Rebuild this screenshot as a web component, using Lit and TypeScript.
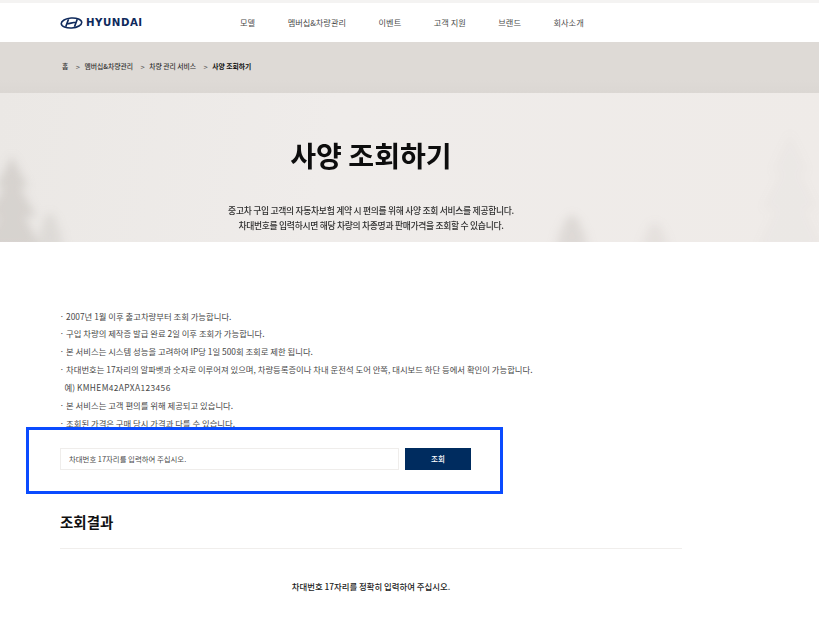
import { LitElement, html, css, svg } from "lit";
import { customElement } from "lit/decorators.js";

const NAV = ["모델", "멤버십&차량관리", "이벤트", "고객 지원", "브랜드", "회사소개"];
const NOTES = [
  "2007년 1월 이후 출고차량부터 조회 가능합니다.",
  "구입 차량의 제작증 발급 완료 2일 이후 조회가 가능합니다.",
  "본 서비스는 시스템 성능을 고려하여 IP당 1일 500회 조회로 제한 됩니다.",
  "차대번호는 17자리의 알파벳과 숫자로 이루어져 있으며, 차량등록증이나 차내 운전석 도어 안쪽, 대시보드 하단 등에서 확인이 가능합니다.",
];

const tree = (x: number, base: number, w: number, h: number, o: number) => svg`
  <path fill="#b5b0aa" opacity=${o} d="M${x} ${base - h} L${x + w * 0.28} ${base - h * 0.66} L${x + w * 0.14} ${base - h * 0.66}
  L${x + w * 0.42} ${base - h * 0.34} L${x + w * 0.22} ${base - h * 0.34} L${x + w * 0.5} ${base} L${x - w * 0.5} ${base}
  L${x - w * 0.22} ${base - h * 0.34} L${x - w * 0.42} ${base - h * 0.34} L${x - w * 0.14} ${base - h * 0.66} L${x - w * 0.28} ${base - h * 0.66} Z"/>`;

@customElement("app-root")
export class AppRoot extends LitElement {
  static styles = css`
    :host {
      display: block;
      position: relative;
      width: 819px;
      height: 628px;
      overflow: hidden;
      background: #fff;
      font-family: "Noto Sans CJK KR", "Noto Sans", sans-serif;
      color: #444;
    }
    .strip { height: 3px; background: #f4f3f2; }
    .header { height: 39px; display: flex; align-items: center; background: #fff; padding-left: 60px; }
    .logo { display: flex; align-items: center; gap: 3px; width: 180px; color: #0f2a5c; }
    .logo-text {
      font-family: "DejaVu Sans", sans-serif;
      font-weight: 700;
      font-size: 11px;
      letter-spacing: 0.55px;
      line-height: 12px;
      transform: scaleX(0.93);
      transform-origin: left center;
    }
    .nav { display: flex; gap: 32.6px; margin-top: -1px; }
    .nav a {
      font-size: 8.2px;
      line-height: 13px;
      color: #4a4a4a;
      white-space: nowrap;
    }
    .crumbs {
      height: 51px;
      box-sizing: border-box;
      background: linear-gradient(180deg, #dedad6 0%, #dedad6 75%, #dbd7d3 100%);
      padding: 0 0 3px 62px;
      display: flex;
      align-items: center;
      font-size: 6.8px;
      font-weight: 500;
      color: #333;
      white-space: nowrap;
    }
    .crumbs .sep { color: #555; margin: 0 4.5px 0 7.5px; font-size: 7.5px; font-weight: 400; }
    .crumbs .here { color: #111; font-weight: 700; }
    .hero {
      position: relative;
      height: 149px;
      background: linear-gradient(100deg, #ebe8e5 0%, #efecea 40%, #efebe8 100%);
      overflow: hidden;
    }
    .hero svg { position: absolute; left: 0; top: 0; }
    .hero-inner { position: relative; width: 622px; margin-left: 60px; text-align: center; }
    .hero h1 {
      margin: 0;
      padding-top: 42px;
      font-size: 28.1px;
      line-height: 40px;
      font-weight: 700;
      color: #0d0d0d;
    }
    .hero p {
      margin: 28px 0 0;
      font-size: 8.8px;
      letter-spacing: -0.3px;
      line-height: 15px;
      font-weight: 500;
      color: #2f2f2f;
    }
    .notes {
      list-style: none;
      margin: 0;
      padding: 65.5px 0 0 59.5px;
      font-size: 8.35px;
      line-height: 17.85px;
      color: #474747;
    }
    .notes li { white-space: nowrap; }
    .notes li::before { content: "· "; }
    .notes .ex { padding-left: 5px; }
    .notes .ex::before { content: ""; }
    .vin { letter-spacing: 0.4px; }
    .search { display: flex; gap: 6px; margin: 15.5px 0 0 60px; }
    .field {
      width: 339px;
      height: 22px;
      box-sizing: border-box;
      border: 1px solid #efedeb;
      padding-left: 8px;
      font-size: 7.4px;
      line-height: 20px;
      color: #4a4a4a;
    }
    .btn {
      width: 66px;
      height: 22px;
      background: #002c5f;
      color: #fff;
      font-size: 7.5px;
      font-weight: 500;
      line-height: 22px;
      text-align: center;
    }
    .result { margin: 40px 0 0 60px; width: 622px; }
    .result h2 {
      margin: 0;
      font-size: 14.5px;
      line-height: 24px;
      font-weight: 700;
      color: #111;
      padding-bottom: 14px;
      border-bottom: 1.5px solid #f0eeec;
    }
    .result p {
      margin: 30px 0 0;
      text-align: center;
      font-size: 8.4px;
      line-height: 14px;
      font-weight: 500;
      color: #222;
    }
    .highlight {
      position: absolute;
      left: 26px;
      top: 427px;
      width: 477px;
      height: 67px;
      box-sizing: border-box;
      border: 3px solid #0a4bff;
      pointer-events: none;
    }
  `;

  render() {
    return html`
      <div class="strip"></div>
      <div class="header">
        <div class="logo">
          <svg width="23" height="12" viewBox="0 0 46 24" fill="none">
            <ellipse cx="23" cy="12" rx="20.5" ry="10" stroke="#0f2a5c" stroke-width="3.2" transform="rotate(-4 23 12)"/>
            <path d="M17 4.5 L11.5 19.5 M34.5 4.5 L29 19.5 M14.5 13.5 C20 13 26 10.5 32 10.5" stroke="#0f2a5c" stroke-width="3.4"/>
          </svg>
          <span class="logo-text">HYUNDAI</span>
        </div>
        <nav class="nav">${NAV.map((n) => html`<a>${n}</a>`)}</nav>
      </div>
      <div class="crumbs">
        <span>홈</span><span class="sep">&gt;</span>
        <span>멤버십&차량관리</span><span class="sep">&gt;</span>
        <span>차량 관리 서비스</span><span class="sep">&gt;</span>
        <span class="here">사양 조회하기</span>
      </div>
      <div class="hero">
        <svg width="819" height="149" viewBox="0 0 819 149">
          <defs><filter id="b" x="-30%" y="-30%" width="160%" height="160%"><feGaussianBlur stdDeviation="4"/></filter></defs>
          <g filter="url(#b)">
            ${tree(12, 155, 58, 92, 0.38)}
            ${tree(50, 155, 34, 36, 0.25)}
            ${tree(572, 155, 40, 34, 0.3)}
            ${tree(655, 155, 34, 26, 0.16)}
            ${tree(790, 155, 66, 115, 0.05)}
          </g>
        </svg>
        <div class="hero-inner">
          <h1>사양 조회하기</h1>
          <p>중고차 구입 고객의 자동차보험 계약 시 편의를 위해 사양 조회 서비스를 제공합니다.<br />차대번호를 입력하시면 해당 차량의 차종명과 판매가격을 조회할 수 있습니다.</p>
        </div>
      </div>
      <ul class="notes">
        ${NOTES.map((n) => html`<li>${n}</li>`)}
        <li class="ex">예) <span class="vin">KMHEM42APXA123456</span></li>
        <li>본 서비스는 고객 편의를 위해 제공되고 있습니다.</li>
        <li>조회된 가격은 구매 당시 가격과 다를 수 있습니다.</li>
      </ul>
      <div class="search">
        <div class="field">차대번호 17자리를 입력하여 주십시오.</div>
        <div class="btn">조회</div>
      </div>
      <div class="result">
        <h2>조회결과</h2>
        <p>차대번호 17자리를 정확히 입력하여 주십시오.</p>
      </div>
      <div class="highlight"></div>
    `;
  }
}
